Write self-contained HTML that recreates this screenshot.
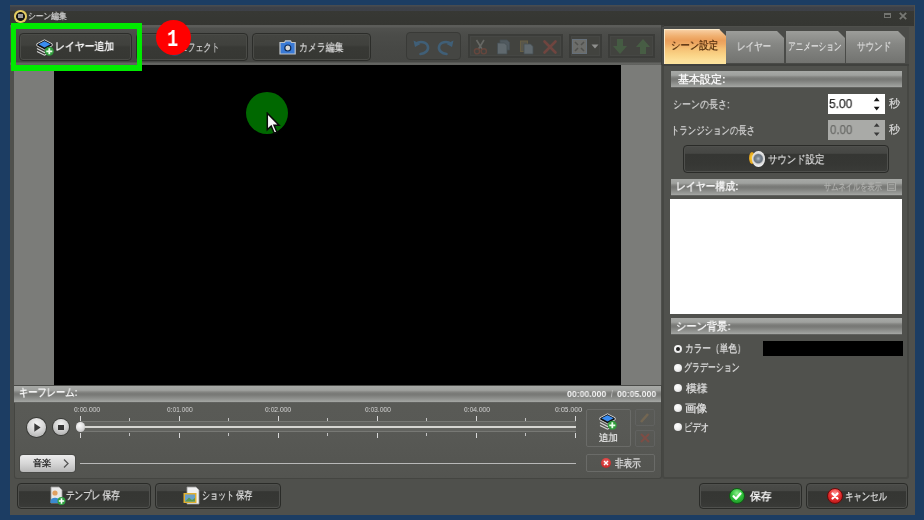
<!DOCTYPE html>
<html><head><meta charset="utf-8"><style>
*{margin:0;padding:0;box-sizing:border-box}
html,body{width:924px;height:520px;overflow:hidden;background:#1c3d63;font-family:"Liberation Sans",sans-serif;position:relative}
.a{position:absolute}
.t{position:absolute;white-space:nowrap;line-height:20px;transform-origin:0 0;will-change:transform;-webkit-text-stroke:0.25px currentColor}
.btn{position:absolute;border-radius:4px;background:linear-gradient(#444541 0,#40413d 42%,#383935 50%,#363733 100%);border:1px solid #2c2d2a;box-shadow:inset 0 0 0 1px #4a4b47}
.grp{position:absolute;border-radius:4px;background:#454643;border:1px solid #393a37}
.grp2{position:absolute;background:#42433f;border:2px solid #3b3c39;box-shadow:inset 0 0 0 1px #464744}
.hdr{position:absolute;background:linear-gradient(#a7a9a6 0,#9fa19e 25%,#8a8b88 33%,#7a7b78 42%,#787976 52%,#9b9d9a 86%,#a4a6a3 93%,#6a6b68 96%,#4a4b48 100%)}
.tab{position:absolute;background:linear-gradient(#9c9d9a 0,#868784 40%,#727370 100%);clip-path:polygon(0 0,calc(100% - 7px) 0,100% 7px,100% 100%,0 100%)}
.rb{position:absolute;width:8px;height:8px;border-radius:50%;background:radial-gradient(circle at 40% 35%,#ffffff 0,#f0f0f0 50%,#c8c8c8 100%)}
.dbtn{position:absolute;border-radius:4px;background:linear-gradient(#4b4c49 0,#464744 28%,#353633 32%,#363734 70%,#3a3b38 100%);border:1px solid #2a2b28;box-shadow:inset 0 0 0 1px #4f504d}
</style></head><body>
<div class="a" style="left:9.5px;top:5px;width:905px;height:509.5px;background:#4f504c"></div>
<div class="a" style="left:10px;top:5px;width:904px;height:20.5px;background:linear-gradient(#4a4e52 0,#44474c 1.5px,#3e4148 2px,#3d4047 6px,#373834 6.5px,#353632 100%)"></div>
<div class="a" style="left:14.3px;top:10.4px;width:12.4px;height:12.4px;border-radius:50%;background:radial-gradient(circle,#161616 0,#161616 44%,#e6cf66 52%,#d8bc4c 86%,#6a5a28 100%)"></div>
<div class="a" style="left:18.3px;top:13.6px;width:4.4px;height:4.6px;background:#c8c8c8;opacity:.75"></div>
<div class="a" style="left:884px;top:13px;width:7px;height:5px;border:1.5px solid #737470;border-top-width:2px"></div>
<svg class="a" style="left:899px;top:11.5px" width="8" height="8"><path d="M0.8 0.8L7.2 7.2M7.2 0.8L0.8 7.2" stroke="#777874" stroke-width="1.8"/></svg>
<div class="a" style="left:661px;top:25px;width:3px;height:40px;background:#3e3f3c"></div>
<div class="a" style="left:10px;top:25px;width:651px;height:40px;background:linear-gradient(#5b5c59 0,#5b5c59 2px,#50514e 3px,#4b4c49 10px,#474845 60%,#454643 37px,#656663 38px,#5f605d 40px)"></div>
<div class="btn" style="left:19px;top:33px;width:113px;height:28px"></div>
<div class="btn" style="left:136px;top:33px;width:112px;height:28px"></div>
<div class="btn" style="left:252px;top:33px;width:119px;height:28px"></div>
<div class="grp" style="left:406px;top:32px;width:55px;height:28px"></div>
<div class="grp2" style="left:468px;top:34px;width:95px;height:24px"></div>
<div class="grp2" style="left:569px;top:34px;width:33px;height:24px"></div>
<div class="grp2" style="left:608px;top:34px;width:47px;height:24px"></div>
<div class="a" style="left:14px;top:65px;width:647px;height:320px;background:#7b7c79"></div>
<div class="a" style="left:54px;top:65px;width:567px;height:319.5px;background:#000"></div>
<div class="a" style="left:246.2px;top:92.3px;width:42px;height:42px;border-radius:50%;background:#006800"></div>
<svg class="a" style="left:266px;top:111.5px" width="16" height="24"><path d="M1.3 1.2L1.3 17.7L5.2 14L8.3 21.2L11 20.2L8 13.2L13.1 13.2Z" fill="#f6f6f6" stroke="#0a0a0a" stroke-width="1.5" stroke-linejoin="miter"/></svg>
<div class="a" style="left:14px;top:385px;width:648px;height:94px;background:linear-gradient(#5a5b57 0,#585955 50%,#535450 100%);border:1px solid #444541;border-top:none;border-radius:0 0 3px 3px"></div>
<div class="a" style="left:14px;top:385px;width:647px;height:1px;background:#4a4b48"></div><div class="hdr" style="left:14px;top:386px;width:647px;height:16.6px"></div>
<div class="a" style="left:662px;top:64px;width:247px;height:415px;background:#50514d;border:2px solid #464743;border-radius:0 0 3px 3px"></div>
<div class="a" style="left:662px;top:27px;width:247px;height:38px;background:#4a4b48"></div>
<div class="a" style="left:664px;top:29px;width:62px;height:35px;background:linear-gradient(#fbdcb0 0,#f6c898 6%,#f0b070 20%,#eb9f5a 32%,#eea862 42%,#f5c074 56%,#fad487 75%,#fde09a 90%,#fde49c 100%);box-shadow:inset 1px 1px 0 #fae8c8;clip-path:polygon(0 0,calc(100% - 7px) 0,100% 7px,100% 100%,0 100%)"></div>
<div class="tab" style="left:726px;top:31px;width:58px;height:32px"></div>
<div class="tab" style="left:786px;top:31px;width:59px;height:32px"></div>
<div class="tab" style="left:846px;top:31px;width:59px;height:32px"></div>
<div class="a" style="left:662px;top:64px;width:247px;height:2px;background:#40413e"></div>
<div class="hdr" style="left:671px;top:71px;width:231px;height:17px"></div>
<div class="hdr" style="left:671px;top:179px;width:231px;height:17px"></div>
<div class="hdr" style="left:671px;top:318px;width:231px;height:17px"></div>
<div class="a" style="left:828px;top:94px;width:57px;height:20px;background:#fff"></div>
<div class="a" style="left:828px;top:120px;width:57px;height:20px;background:#a9aaa7"></div>
<svg class="a" style="left:872px;top:95px" width="10" height="45"><path d="M4.7 2.6L7.6 6.2H1.8Z M4.7 15.4L7.6 11.8H1.8Z" fill="#151515"/><path d="M4.7 28.2L7.6 31.8H1.8Z M4.7 41L7.6 37.4H1.8Z" fill="#3a3a3a"/></svg>
<div class="dbtn" style="left:683px;top:145px;width:206px;height:28px"></div>
<div class="a" style="left:749px;top:152px;width:6px;height:12px;border-radius:50%;background:radial-gradient(#ffd23a,#d08a10)"></div>
<div class="a" style="left:751.5px;top:151.2px;width:13.5px;height:15.6px;border-radius:50%;background:radial-gradient(circle at 48% 48%,#b8c0c8 0,#7c8894 20%,#6a7480 38%,#d8d8d8 50%,#f4f4f4 72%,#c8c8c8 92%,#808080 100%)"></div>
<div class="a" style="left:887px;top:182px;width:9px;height:9px;border:1px solid #a8a9a6;background:#8a8b88"></div><div class="a" style="left:889px;top:184px;width:5px;height:5px;border-top:1px solid #a0a19e;border-bottom:1px solid #a0a19e"></div>
<div class="a" style="left:670px;top:199px;width:232px;height:115px;background:#fff"></div>
<div class="rb" style="left:674px;top:344.5px"></div>
<div class="rb" style="left:674px;top:363.5px"></div>
<div class="rb" style="left:674px;top:383.5px"></div>
<div class="rb" style="left:674px;top:403.5px"></div>
<div class="rb" style="left:674px;top:423px"></div>
<div class="a" style="left:676px;top:346.5px;width:4px;height:4px;border-radius:50%;background:#222"></div>
<div class="a" style="left:763px;top:341px;width:140px;height:15px;background:#000"></div>
<div class="dbtn" style="left:17px;top:483px;width:134px;height:26px"></div>
<div class="dbtn" style="left:155px;top:483px;width:126px;height:26px"></div>
<div class="dbtn" style="left:699px;top:483px;width:103px;height:26px"></div>
<div class="dbtn" style="left:806px;top:483px;width:102px;height:26px"></div>
<div class="a" style="left:729px;top:488px;width:16px;height:16px;border-radius:50%;background:radial-gradient(circle at 50% 30%,#8ef08e 0,#2fc03a 45%,#1a8a22 100%);border:1px solid #0f5a14"></div>
<svg class="a" style="left:731px;top:490px" width="12" height="12"><path d="M2.5 6.2L5 8.8L9.5 3.5" fill="none" stroke="#fff" stroke-width="2.2" stroke-linecap="round" stroke-linejoin="round"/></svg>
<div class="a" style="left:827px;top:488px;width:16px;height:16px;border-radius:50%;background:radial-gradient(circle at 50% 30%,#ff9a9a 0,#e83030 45%,#a81010 100%);border:1px solid #6a0a0a"></div>
<svg class="a" style="left:829px;top:490px" width="12" height="12"><path d="M3.5 3.5L8.5 8.5M8.5 3.5L3.5 8.5" fill="none" stroke="#fff" stroke-width="2.2" stroke-linecap="round"/></svg>
<div class="a" style="left:27px;top:417.5px;width:19px;height:19px;border-radius:50%;background:radial-gradient(circle at 50% 30%,#f4f4f4 0,#d8d8d8 45%,#a8a8a8 100%);box-shadow:0 0 0 1px #3a3b38"></div>
<svg class="a" style="left:27px;top:417.5px" width="19" height="19"><path d="M7.3 5.3L13.6 9.5L7.3 13.7Z" fill="#3a3a3a"/></svg>
<div class="a" style="left:52.5px;top:419px;width:16px;height:16px;border-radius:50%;background:radial-gradient(circle at 50% 30%,#f0f0f0 0,#d4d4d4 45%,#a4a4a4 100%);box-shadow:0 0 0 1px #3a3b38"></div>
<div class="a" style="left:58px;top:424.5px;width:5.5px;height:5.5px;background:#363636"></div>
<div class="a" style="left:80px;top:421px;width:496px;height:11px;background:#62635f;border-top:1px solid #777874;border-bottom:1px solid #777874"></div>
<div class="a" style="left:82px;top:425.7px;width:494px;height:2.4px;background:#d6d6d2"></div>
<div class="a" style="left:79.55px;top:415.5px;width:1.5px;height:5.5px;background:#d8d8d8"></div><div class="a" style="left:79.55px;top:432.5px;width:1.5px;height:5px;background:#d8d8d8"></div><div class="a" style="left:129.05px;top:418px;width:1.2px;height:3px;background:#c4c4c4"></div><div class="a" style="left:129.05px;top:432.5px;width:1.2px;height:3px;background:#c4c4c4"></div><div class="a" style="left:178.60px;top:415.5px;width:1.5px;height:5.5px;background:#d8d8d8"></div><div class="a" style="left:178.60px;top:432.5px;width:1.5px;height:5px;background:#d8d8d8"></div><div class="a" style="left:228.10px;top:418px;width:1.2px;height:3px;background:#c4c4c4"></div><div class="a" style="left:228.10px;top:432.5px;width:1.2px;height:3px;background:#c4c4c4"></div><div class="a" style="left:277.65px;top:415.5px;width:1.5px;height:5.5px;background:#d8d8d8"></div><div class="a" style="left:277.65px;top:432.5px;width:1.5px;height:5px;background:#d8d8d8"></div><div class="a" style="left:327.15px;top:418px;width:1.2px;height:3px;background:#c4c4c4"></div><div class="a" style="left:327.15px;top:432.5px;width:1.2px;height:3px;background:#c4c4c4"></div><div class="a" style="left:376.70px;top:415.5px;width:1.5px;height:5.5px;background:#d8d8d8"></div><div class="a" style="left:376.70px;top:432.5px;width:1.5px;height:5px;background:#d8d8d8"></div><div class="a" style="left:426.20px;top:418px;width:1.2px;height:3px;background:#c4c4c4"></div><div class="a" style="left:426.20px;top:432.5px;width:1.2px;height:3px;background:#c4c4c4"></div><div class="a" style="left:475.75px;top:415.5px;width:1.5px;height:5.5px;background:#d8d8d8"></div><div class="a" style="left:475.75px;top:432.5px;width:1.5px;height:5px;background:#d8d8d8"></div><div class="a" style="left:525.25px;top:418px;width:1.2px;height:3px;background:#c4c4c4"></div><div class="a" style="left:525.25px;top:432.5px;width:1.2px;height:3px;background:#c4c4c4"></div><div class="a" style="left:574.80px;top:415.5px;width:1.5px;height:5.5px;background:#d8d8d8"></div><div class="a" style="left:574.80px;top:432.5px;width:1.5px;height:5px;background:#d8d8d8"></div>
<div class="a" style="left:75.5px;top:422px;width:9.5px;height:9.5px;border-radius:50%;background:radial-gradient(circle at 40% 35%,#fafafa 0,#dedede 50%,#b0b0b0 100%)"></div>
<div class="a" style="left:20px;top:455px;width:55px;height:16.5px;border-radius:3px;background:linear-gradient(#ececec 0,#d6d6d6 50%,#b8b8b8 100%);box-shadow:0 0 0 1px #4a4b48"></div>
<svg class="a" style="left:62px;top:458px" width="8" height="11"><path d="M2 1.5L6 5.5L2 9.5" fill="none" stroke="#555" stroke-width="1.3"/></svg>
<div class="a" style="left:79.5px;top:463px;width:496px;height:1px;background:#b8b8b8"></div>
<div class="a" style="left:586px;top:409px;width:45px;height:38px;border:1px solid #6a6b68;border-radius:2px"></div>
<div class="a" style="left:635px;top:409px;width:20px;height:17px;border:1px solid #616260;border-radius:2px"></div>
<div class="a" style="left:635px;top:430px;width:20px;height:17px;border:1px solid #616260;border-radius:2px"></div>
<svg class="a" style="left:635px;top:409px" width="20" height="38"><path d="M6 13L13 5" stroke="#7a6a52" stroke-width="2.5" opacity=".8"/><path d="M6 25L14 33M14 25L6 33" stroke="#8a4a40" stroke-width="2" opacity=".75"/></svg>
<div class="a" style="left:586px;top:454px;width:69px;height:18px;border:1px solid #6a6b68;border-radius:2px"></div>
<div class="a" style="left:601px;top:458px;width:10px;height:10px;border-radius:50%;background:radial-gradient(circle at 50% 35%,#f06060,#b81818)"></div>
<svg class="a" style="left:601px;top:458px" width="10" height="10"><path d="M3 3L7 7M7 3L3 7" stroke="#fff" stroke-width="1.4"/></svg>
<svg class="a" style="left:36px;top:39px" width="18" height="17" viewBox="0 0 18 17"><path d="M1 9.5L8.5 13.5L16 9.5" fill="none" stroke="#d8d8d8" stroke-width="1.2"/><path d="M1 12.5L8.5 16.2L16 12.5" fill="none" stroke="#d8d8d8" stroke-width="1.2"/><path d="M8.5 0.8L16.2 4.8L16.2 6.8L8.5 10.8L0.8 6.8L0.8 4.8Z" fill="#111" stroke="#d0d0d0" stroke-width="1"/><path d="M8.5 2.2L14.5 5.3L8.5 8.6L2.5 5.3Z" fill="#3a8cf0"/><circle cx="13.3" cy="12.3" r="4.5" fill="#2f9a3a"/><path d="M13.3 9.3V15.3M10.3 12.3H16.3" stroke="#e8ffe8" stroke-width="1.8"/></svg>
<svg class="a" style="left:599px;top:413px" width="18" height="17" viewBox="0 0 18 17"><path d="M1 9.5L8.5 13.5L16 9.5" fill="none" stroke="#d8d8d8" stroke-width="1.2"/><path d="M1 12.5L8.5 16.2L16 12.5" fill="none" stroke="#d8d8d8" stroke-width="1.2"/><path d="M8.5 0.8L16.2 4.8L16.2 6.8L8.5 10.8L0.8 6.8L0.8 4.8Z" fill="#111" stroke="#d0d0d0" stroke-width="1"/><path d="M8.5 2.2L14.5 5.3L8.5 8.6L2.5 5.3Z" fill="#3a8cf0"/><circle cx="13.3" cy="12.3" r="4.5" fill="#2f9a3a"/><path d="M13.3 9.3V15.3M10.3 12.3H16.3" stroke="#e8ffe8" stroke-width="1.8"/></svg>
<svg class="a" style="left:279px;top:40px" width="18" height="15"><path d="M5.5 2.5L6.5 0.8H11.5L12.5 2.5H16.2V14H1V2.5Z" fill="#3a7ad6" stroke="#bfc4c8" stroke-width="1.2"/><circle cx="8.8" cy="8" r="3.6" fill="#0d2a55"/><circle cx="8.8" cy="8" r="2.4" fill="#d8d8d8"/></svg>
<div class="a" style="left:168px;top:44px;width:14px;height:12px;border-radius:50%;background:#2b4a6a"></div>
<svg class="a" style="left:412px;top:38px;opacity:.7" width="44" height="18"><g fill="none" stroke="#3e6a8e" stroke-width="2.6" stroke-linecap="round"><path d="M4 5.5C8 3 15 3.5 16 9C16.5 13 13 15.5 8.5 16"/><path d="M39 5.5C35 3 28 3.5 27 9C26.5 13 30 15.5 34.5 16"/></g><path d="M1.5 2.5L3 9L8.5 6Z M41.5 2.5L40 9L34.5 6Z" fill="#3e6a8e"/></svg>
<svg class="a" style="left:473px;top:39px;opacity:.5" width="15" height="16"><path d="M3.5 1L9 10M11 1L5.5 10" stroke="#8a8b88" stroke-width="1.6"/><circle cx="4" cy="12.3" r="2.6" fill="none" stroke="#8a4a3c" stroke-width="1.4"/><circle cx="10.8" cy="12.3" r="2.6" fill="none" stroke="#8a4a3c" stroke-width="1.4"/></svg>
<svg class="a" style="left:496px;top:39px;opacity:.5" width="15" height="16"><path d="M4 1H11L13.5 3.5V11H4Z" fill="#5e7080" stroke="#4a5a68" stroke-width=".8"/><path d="M1.5 4H8.5L11 6.5V15H1.5Z" fill="#7e909e" stroke="#4a5a68" stroke-width=".8"/></svg>
<svg class="a" style="left:519px;top:39px;opacity:.5" width="15" height="16"><path d="M1 1.5H9V13H1Z" fill="#8a7a4a"/><path d="M2 2.5H8V12H2Z" fill="#6e6a58"/><path d="M5 5H11.5L14 7.5V15H5Z" fill="#7e909e" stroke="#4a5a68" stroke-width=".8"/></svg>
<svg class="a" style="left:542px;top:39px;opacity:.5" width="16" height="16"><path d="M2.5 2.5L13.5 13.5M13.5 2.5L2.5 13.5" stroke="#9c4840" stroke-width="2.6" stroke-linecap="round"/></svg>
<div class="a" style="left:572px;top:38.5px;width:15px;height:15px;background:#6c6d6a;border:1px solid #66707a"></div>
<svg class="a" style="left:574px;top:40.5px;opacity:.6" width="11" height="11"><path d="M1 1L4 4M10 1L7 4M1 10L4 7M10 10L7 7" stroke="#3e3f3c" stroke-width="1.6"/></svg>
<svg class="a" style="left:591px;top:43.5px;opacity:.5" width="8" height="5"><path d="M0.5 0.5H7.5L4 4.5Z" fill="#dcdcdc"/></svg>
<svg class="a" style="left:612px;top:38px;opacity:.45" width="16" height="17"><path d="M5 1H11V8H15L8 16L1 8H5Z" fill="#4a7a48"/></svg>
<svg class="a" style="left:635px;top:38px;opacity:.45" width="16" height="17"><path d="M5 16H11V9H15L8 1L1 9H5Z" fill="#4f7e4c"/></svg>
<svg class="a" style="left:47px;top:486px" width="20" height="20"><path d="M4 1H12L15 4V17H4Z" fill="#e8e8e8" stroke="#9a9a9a" stroke-width=".8"/><circle cx="8" cy="7" r="2.6" fill="#e0a060"/><path d="M3.5 15C3.5 10.5 12.5 10.5 12.5 15V17H3.5Z" fill="#3a8ad0"/><circle cx="14.5" cy="15" r="4" fill="#2ea040"/><path d="M14.5 12.3V17.7M11.8 15H17.2" stroke="#fff" stroke-width="1.6"/></svg>
<svg class="a" style="left:182px;top:486px" width="20" height="20"><path d="M5 1H14L17 4V18H5Z" fill="#f0f0f0" stroke="#9a9a9a" stroke-width=".8"/><rect x="1.5" y="7" width="13" height="10" fill="#e0b030"/><rect x="3" y="8.5" width="10" height="7" fill="#6aa0c8"/><path d="M3 15.5L7 11.5L10 14L13 12V15.5Z" fill="#5a9a50"/></svg>
<div class="t" style="left:27.74px;top:6.20px;font-size:9px;font-weight:normal;color:#d2d2d2;transform:scaleX(0.860);">シーン編集</div>
<div class="t" style="left:55.10px;top:36.30px;font-size:11px;font-weight:bold;color:#f2f2f2;transform:scaleX(0.898);-webkit-text-stroke:0;">レイヤー追加</div>
<div class="t" style="left:179.26px;top:37.40px;font-size:11px;font-weight:normal;color:#d0d0d0;transform:scaleX(0.739);">エフェクト</div>
<div class="t" style="left:298.59px;top:36.90px;font-size:11px;font-weight:normal;color:#d8d8d8;transform:scaleX(0.809);">カメラ編集</div>
<div class="t" style="left:670.94px;top:35.10px;font-size:11px;font-weight:normal;color:#4a2608;transform:scaleX(0.857);">シーン設定</div>
<div class="t" style="left:737.15px;top:36.30px;font-size:11px;font-weight:normal;color:#dedede;transform:scaleX(0.776);">レイヤー</div>
<div class="t" style="left:787.91px;top:36.20px;font-size:11px;font-weight:normal;color:#dedede;transform:scaleX(0.695);">アニメーション</div>
<div class="t" style="left:857.06px;top:36.20px;font-size:11px;font-weight:normal;color:#dedede;transform:scaleX(0.779);">サウンド</div>
<div class="t" style="left:678.00px;top:68.70px;font-size:11px;font-weight:bold;color:#f4f4f4;transform:scaleX(1.000);-webkit-text-stroke:0;">基本設定:</div>
<div class="t" style="left:673.18px;top:94.10px;font-size:11px;font-weight:normal;color:#d4d4d4;transform:scaleX(0.818);">シーンの長さ:</div>
<div class="t" style="left:670.94px;top:119.50px;font-size:11px;font-weight:normal;color:#d4d4d4;transform:scaleX(0.764);">トランジションの長さ</div>
<div class="t" style="left:828.88px;top:94.10px;font-size:13px;font-weight:normal;color:#2a2a2a;transform:scaleX(0.925);">5.00</div>
<div class="t" style="left:829.80px;top:119.50px;font-size:13px;font-weight:normal;color:#6a6b68;transform:scaleX(0.888);">0.00</div>
<div class="t" style="left:889.00px;top:93.00px;font-size:11px;font-weight:normal;color:#d4d4d4;transform:scaleX(1.000);">秒</div>
<div class="t" style="left:889.00px;top:118.90px;font-size:11px;font-weight:normal;color:#d4d4d4;transform:scaleX(1.000);">秒</div>
<div class="t" style="left:768.14px;top:148.50px;font-size:11px;font-weight:normal;color:#dcdcdc;transform:scaleX(0.855);">サウンド設定</div>
<div class="t" style="left:675.80px;top:176.30px;font-size:11px;font-weight:bold;color:#f4f4f4;transform:scaleX(0.897);-webkit-text-stroke:0;">レイヤー構成:</div>
<div class="t" style="left:823.98px;top:176.80px;font-size:10px;font-weight:normal;color:#b0b1ae;transform:scaleX(0.724);">サムネイルを表示</div>
<div class="t" style="left:675.76px;top:315.60px;font-size:11px;font-weight:bold;color:#f4f4f4;transform:scaleX(0.935);-webkit-text-stroke:0;">シーン背景:</div>
<div class="t" style="left:685.01px;top:338.00px;font-size:11px;font-weight:normal;color:#e0e0e0;transform:scaleX(0.788);">カラー（単色）</div>
<div class="t" style="left:684.35px;top:356.80px;font-size:11px;font-weight:normal;color:#e0e0e0;transform:scaleX(0.724);">グラデーション</div>
<div class="t" style="left:685.80px;top:377.50px;font-size:11px;font-weight:normal;color:#e0e0e0;transform:scaleX(0.976);">模様</div>
<div class="t" style="left:684.77px;top:397.70px;font-size:11px;font-weight:normal;color:#e0e0e0;transform:scaleX(1.025);">画像</div>
<div class="t" style="left:684.29px;top:416.50px;font-size:11px;font-weight:normal;color:#e0e0e0;transform:scaleX(0.757);">ビデオ</div>
<div class="t" style="left:750.00px;top:485.50px;font-size:11px;font-weight:bold;color:#f0f0f0;transform:scaleX(0.977);-webkit-text-stroke:0;">保存</div>
<div class="t" style="left:844.94px;top:485.50px;font-size:11px;font-weight:normal;color:#e0e0e0;transform:scaleX(0.765);">キャンセル</div>
<div class="t" style="left:66.22px;top:485.20px;font-size:11px;font-weight:normal;color:#e0e0e0;transform:scaleX(0.779);">テンプレ 保存</div>
<div class="t" style="left:202.27px;top:485.20px;font-size:11px;font-weight:normal;color:#e0e0e0;transform:scaleX(0.729);">ショット 保存</div>
<div class="t" style="left:19.16px;top:382.30px;font-size:11px;font-weight:bold;color:#f4f4f4;transform:scaleX(0.841);-webkit-text-stroke:0;">キーフレーム:</div>
<div class="t" style="left:566.50px;top:383.90px;font-size:9px;font-weight:bold;color:#f4f4f4;transform:scaleX(0.968);-webkit-text-stroke:0;">00:00.000</div>
<div class="t" style="left:610.60px;top:384.40px;font-size:9px;font-weight:normal;color:#c8c8c8;transform:scaleX(0.667);">/</div>
<div class="t" style="left:617.10px;top:383.90px;font-size:9px;font-weight:bold;color:#f4f4f4;transform:scaleX(0.967);-webkit-text-stroke:0;">00:05.000</div>
<div class="t" style="left:74.30px;top:400.30px;font-size:8px;font-weight:normal;color:#d8d8d8;transform:scaleX(0.839);-webkit-text-stroke:0;">0:00.000</div>
<div class="t" style="left:166.50px;top:400.30px;font-size:8px;font-weight:normal;color:#d8d8d8;transform:scaleX(0.823);-webkit-text-stroke:0;">0:01.000</div>
<div class="t" style="left:265.20px;top:400.30px;font-size:8px;font-weight:normal;color:#d8d8d8;transform:scaleX(0.839);-webkit-text-stroke:0;">0:02.000</div>
<div class="t" style="left:365.00px;top:400.30px;font-size:8px;font-weight:normal;color:#d8d8d8;transform:scaleX(0.829);-webkit-text-stroke:0;">0:03.000</div>
<div class="t" style="left:464.30px;top:400.30px;font-size:8px;font-weight:normal;color:#d8d8d8;transform:scaleX(0.832);-webkit-text-stroke:0;">0:04.000</div>
<div class="t" style="left:555.20px;top:400.30px;font-size:8px;font-weight:normal;color:#d8d8d8;transform:scaleX(0.868);-webkit-text-stroke:0;">0:05.000</div>
<div class="t" style="left:33.22px;top:453.00px;font-size:9px;font-weight:normal;color:#1e1e1e;transform:scaleX(1.040);">音楽</div>
<div class="t" style="left:599.06px;top:428.20px;font-size:10px;font-weight:normal;color:#e8e8e8;transform:scaleX(0.944);">追加</div>
<div class="t" style="left:615.02px;top:453.10px;font-size:11px;font-weight:normal;color:#e0e0e0;transform:scaleX(0.781);">非表示</div>
<div class="a" style="left:11px;top:23px;width:131px;height:48px;border:solid #00ea00;border-width:6px 5px 6px 5px"></div>
<div class="a" style="left:156px;top:20px;width:35px;height:35px;border-radius:50%;background:#ff0000"></div>
<div class="t" style="left:167.35px;top:30.00px;font-size:24px;font-weight:bold;color:#ffffff;transform:scaleX(0.775);font-family:'Liberation Mono',monospace;-webkit-text-stroke:0;">1</div>
</body></html>
